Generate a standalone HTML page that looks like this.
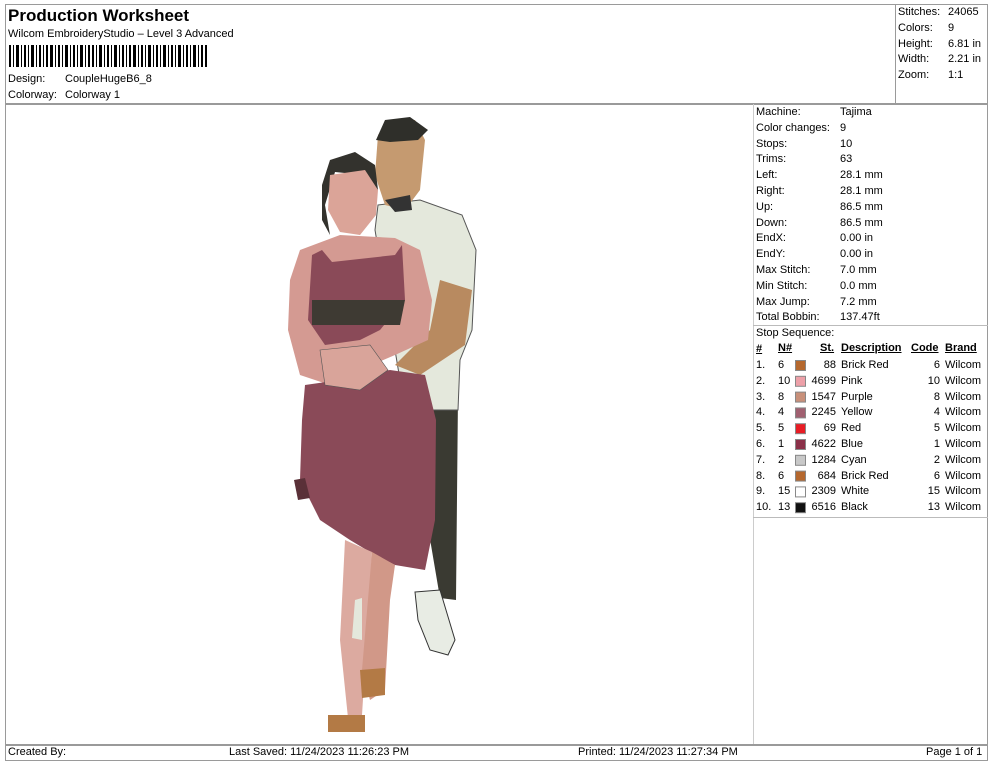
<!DOCTYPE html>
<html><head><meta charset="utf-8"><style>
*{margin:0;padding:0;box-sizing:border-box}
body{width:990px;height:762px;background:#fff;font-family:"Liberation Sans",Arial,sans-serif;font-size:11px;color:#000;position:relative;overflow:hidden}
.a{position:absolute;white-space:nowrap}
.ln{position:absolute;background:#9a9a9a}
</style></head><body>
<div class="ln" style="left:5px;top:4px;width:983px;height:1px"></div>
<div class="ln" style="left:5px;top:4px;width:1px;height:757px"></div>
<div class="ln" style="left:987px;top:4px;width:1px;height:757px"></div>
<div class="ln" style="left:5px;top:760px;width:983px;height:1px"></div>
<div class="ln" style="left:5px;top:103px;width:983px;height:2px"></div>
<div class="ln" style="left:895px;top:4px;width:1px;height:100px"></div>
<div class="ln" style="left:753px;top:104px;width:1px;height:640px;background:#ccc"></div>
<div class="ln" style="left:753px;top:325px;width:235px;height:1px;background:#bbb"></div>
<div class="ln" style="left:753px;top:517px;width:235px;height:1px;background:#bbb"></div>
<div class="ln" style="left:5px;top:744px;width:983px;height:2px"></div>

<div class="a" style="left:8px;top:6px;font-size:17px;font-weight:bold">Production Worksheet</div>
<div class="a" style="left:8px;top:28px">Wilcom EmbroideryStudio – Level 3 Advanced</div>
<svg class="a" style="left:9px;top:45px" width="200" height="22">
<g fill="#000">
<rect x="0" y="0" width="2" height="22"/><rect x="4" y="0" width="1" height="22"/><rect x="7" y="0" width="3" height="22"/><rect x="12" y="0" width="1" height="22"/><rect x="15" y="0" width="2" height="22"/><rect x="19" y="0" width="1" height="22"/><rect x="22" y="0" width="3" height="22"/><rect x="27" y="0" width="1" height="22"/><rect x="30" y="0" width="2" height="22"/><rect x="34" y="0" width="1" height="22"/><rect x="37" y="0" width="2" height="22"/><rect x="41" y="0" width="3" height="22"/><rect x="46" y="0" width="1" height="22"/><rect x="49" y="0" width="2" height="22"/><rect x="53" y="0" width="1" height="22"/><rect x="56" y="0" width="3" height="22"/><rect x="61" y="0" width="1" height="22"/><rect x="64" y="0" width="2" height="22"/><rect x="68" y="0" width="1" height="22"/><rect x="71" y="0" width="3" height="22"/><rect x="76" y="0" width="1" height="22"/><rect x="79" y="0" width="2" height="22"/><rect x="83" y="0" width="2" height="22"/><rect x="87" y="0" width="1" height="22"/><rect x="90" y="0" width="3" height="22"/><rect x="95" y="0" width="1" height="22"/><rect x="98" y="0" width="2" height="22"/><rect x="102" y="0" width="1" height="22"/><rect x="105" y="0" width="3" height="22"/><rect x="110" y="0" width="1" height="22"/><rect x="113" y="0" width="2" height="22"/><rect x="117" y="0" width="1" height="22"/><rect x="120" y="0" width="2" height="22"/><rect x="124" y="0" width="3" height="22"/><rect x="129" y="0" width="1" height="22"/><rect x="132" y="0" width="2" height="22"/><rect x="136" y="0" width="1" height="22"/><rect x="139" y="0" width="3" height="22"/><rect x="144" y="0" width="1" height="22"/><rect x="147" y="0" width="2" height="22"/><rect x="151" y="0" width="1" height="22"/><rect x="154" y="0" width="3" height="22"/><rect x="159" y="0" width="1" height="22"/><rect x="162" y="0" width="2" height="22"/><rect x="166" y="0" width="1" height="22"/><rect x="169" y="0" width="3" height="22"/><rect x="174" y="0" width="1" height="22"/><rect x="177" y="0" width="2" height="22"/><rect x="181" y="0" width="1" height="22"/><rect x="184" y="0" width="3" height="22"/><rect x="189" y="0" width="1" height="22"/><rect x="192" y="0" width="2" height="22"/><rect x="196" y="0" width="2" height="22"/>
</g></svg>
<div class="a" style="left:8px;top:73px">Design:</div><div class="a" style="left:65px;top:73px">CoupleHugeB6_8</div>
<div class="a" style="left:8px;top:89px">Colorway:</div><div class="a" style="left:65px;top:89px">Colorway 1</div>

<div class="a" style="left:898px;top:5px;line-height:15.8px">Stitches:<br>Colors:<br>Height:<br>Width:<br>Zoom:</div>
<div class="a" style="left:948px;top:5px;line-height:15.8px">24065<br>9<br>6.81 in<br>2.21 in<br>1:1</div>

<div class="a" style="left:756px;top:105px;line-height:15.8px">Machine:<br>Color changes:<br>Stops:<br>Trims:<br>Left:<br>Right:<br>Up:<br>Down:<br>EndX:<br>EndY:<br>Max Stitch:<br>Min Stitch:<br>Max Jump:<br>Total Bobbin:<br>Stop Sequence:</div>
<div class="a" style="left:840px;top:105px;line-height:15.8px">Tajima<br>9<br>10<br>63<br>28.1 mm<br>28.1 mm<br>86.5 mm<br>86.5 mm<br>0.00 in<br>0.00 in<br>7.0 mm<br>0.0 mm<br>7.2 mm<br>137.47ft</div>

<div class="a" style="left:756px;top:342px;line-height:15.8px;font-weight:bold;text-decoration:underline">#</div>
<div class="a" style="left:778px;top:342px;font-weight:bold;text-decoration:underline">N#</div>
<div class="a" style="left:820px;top:342px;font-weight:bold;text-decoration:underline">St.</div>
<div class="a" style="left:841px;top:342px;font-weight:bold;text-decoration:underline">Description</div>
<div class="a" style="left:911px;top:342px;font-weight:bold;text-decoration:underline">Code</div>
<div class="a" style="left:945px;top:342px;font-weight:bold;text-decoration:underline">Brand</div>
<div class="a" style="left:756px;top:358px;line-height:15.8px">1.<br>2.<br>3.<br>4.<br>5.<br>6.<br>7.<br>8.<br>9.<br>10.</div>
<div class="a" style="left:778px;top:358px;line-height:15.8px">6<br>10<br>8<br>4<br>5<br>1<br>2<br>6<br>15<br>13</div>
<div class="a" style="left:806px;top:358px;line-height:15.8px;text-align:right;width:30px">88<br>4699<br>1547<br>2245<br>69<br>4622<br>1284<br>684<br>2309<br>6516</div>
<div class="a" style="left:841px;top:358px;line-height:15.8px">Brick Red<br>Pink<br>Purple<br>Yellow<br>Red<br>Blue<br>Cyan<br>Brick Red<br>White<br>Black</div>
<div class="a" style="left:910px;top:358px;line-height:15.8px;text-align:right;width:30px">6<br>10<br>8<br>4<br>5<br>1<br>2<br>6<br>15<br>13</div>
<div class="a" style="left:945px;top:358px;line-height:15.8px">Wilcom<br>Wilcom<br>Wilcom<br>Wilcom<br>Wilcom<br>Wilcom<br>Wilcom<br>Wilcom<br>Wilcom<br>Wilcom</div>
<svg class="a" style="left:795px;top:358px" width="12" height="160">
<rect x="0.5" y="2.5" width="10" height="10" fill="#b5682e" stroke="#888"/>
<rect x="0.5" y="18.3" width="10" height="10" fill="#eda0a8" stroke="#888"/>
<rect x="0.5" y="34.1" width="10" height="10" fill="#c8907a" stroke="#888"/>
<rect x="0.5" y="49.9" width="10" height="10" fill="#a06070" stroke="#888"/>
<rect x="0.5" y="65.7" width="10" height="10" fill="#e81c24" stroke="#888"/>
<rect x="0.5" y="81.5" width="10" height="10" fill="#8a3048" stroke="#888"/>
<rect x="0.5" y="97.3" width="10" height="10" fill="#c8c8c8" stroke="#888"/>
<rect x="0.5" y="113.1" width="10" height="10" fill="#b5682e" stroke="#888"/>
<rect x="0.5" y="128.9" width="10" height="10" fill="#fff" stroke="#888"/>
<rect x="0.5" y="144.7" width="10" height="10" fill="#111" stroke="#888"/>
</svg>

<svg class="a" style="left:0;top:0" width="753" height="744">
<!-- man pants -->
<path d="M410 395 L458 395 L456 600 L440 598 L420 480 L405 430Z" fill="#3a3a32"/>
<!-- man shoe -->
<path d="M415 592 L440 590 L455 640 L448 655 L430 650 L418 620Z" fill="#e8ece4" stroke="#333"/>
<!-- man shirt -->
<path d="M378 205 L420 200 L462 215 L476 250 L472 330 L460 360 L458 410 L420 410 L400 380 L375 230Z" fill="#e4e8dc" stroke="#555"/>
<!-- man arm -->
<path d="M440 280 L472 290 L465 345 L420 375 L395 365 L430 330Z" fill="#b88a60"/>
<!-- man head -->
<path d="M378 135 L390 120 L415 120 L425 140 L420 190 L405 210 L385 205 L375 175Z" fill="#c59a70"/>
<path d="M376 140 L385 120 L410 117 L428 130 L418 140 L390 142Z" fill="#2f2f2a"/>
<path d="M385 200 L410 195 L412 210 L395 212Z" fill="#333"/>
<!-- woman hair -->
<path d="M322 185 L330 160 L355 152 L375 165 L378 190 L365 175 L335 172 L325 205 L330 235 L322 220Z" fill="#33322d"/>
<!-- woman head -->
<path d="M330 175 L365 170 L378 190 L376 215 L360 235 L340 232 L328 210Z" fill="#dba498"/>
<!-- woman arms/torso -->
<path d="M300 250 L340 235 L395 238 L420 250 L432 300 L428 340 L395 355 L360 370 L330 385 L300 375 L288 330 L290 280Z" fill="#d49a92"/>
<!-- dress -->
<path d="M312 255 L322 250 L332 262 L395 255 L402 245 L405 300 L380 330 L360 340 L325 345 L308 320Z" fill="#8a4a58"/>
<path d="M312 300 L405 300 L400 325 L312 325Z" fill="#3e3a33"/>
<path d="M305 385 L340 380 L390 370 L425 375 L436 420 L435 520 L425 570 L395 565 L375 555 L350 540 L320 520 L300 480 L302 420Z" fill="#8a4a58"/>
<path d="M294 480 L305 478 L310 498 L298 500Z" fill="#5a3038"/>
<!-- hands -->
<path d="M320 350 L370 345 L388 370 L360 390 L325 385Z" fill="#d9a49a" stroke="#555" stroke-width="0.6"/>
<!-- legs -->
<path d="M345 540 L372 552 L368 620 L362 715 L348 718 L340 640Z" fill="#dcaaa0"/>
<path d="M372 552 L395 565 L390 600 L385 690 L370 700 L362 670Z" fill="#d19888"/>
<path d="M355 600 L362 598 L362 640 L352 638Z" fill="#e4e8dc"/>
<!-- sandals -->
<path d="M328 715 L365 715 L365 732 L328 732Z" fill="#b37a45"/>
<path d="M360 670 L385 668 L385 695 L362 698Z" fill="#b37a45"/>
</svg>

<div class="a" style="left:8px;top:746px">Created By:</div>
<div class="a" style="left:229px;top:746px">Last Saved: 11/24/2023 11:26:23 PM</div>
<div class="a" style="left:578px;top:746px">Printed: 11/24/2023 11:27:34 PM</div>
<div class="a" style="left:926px;top:746px">Page 1 of 1</div>
</body></html>
